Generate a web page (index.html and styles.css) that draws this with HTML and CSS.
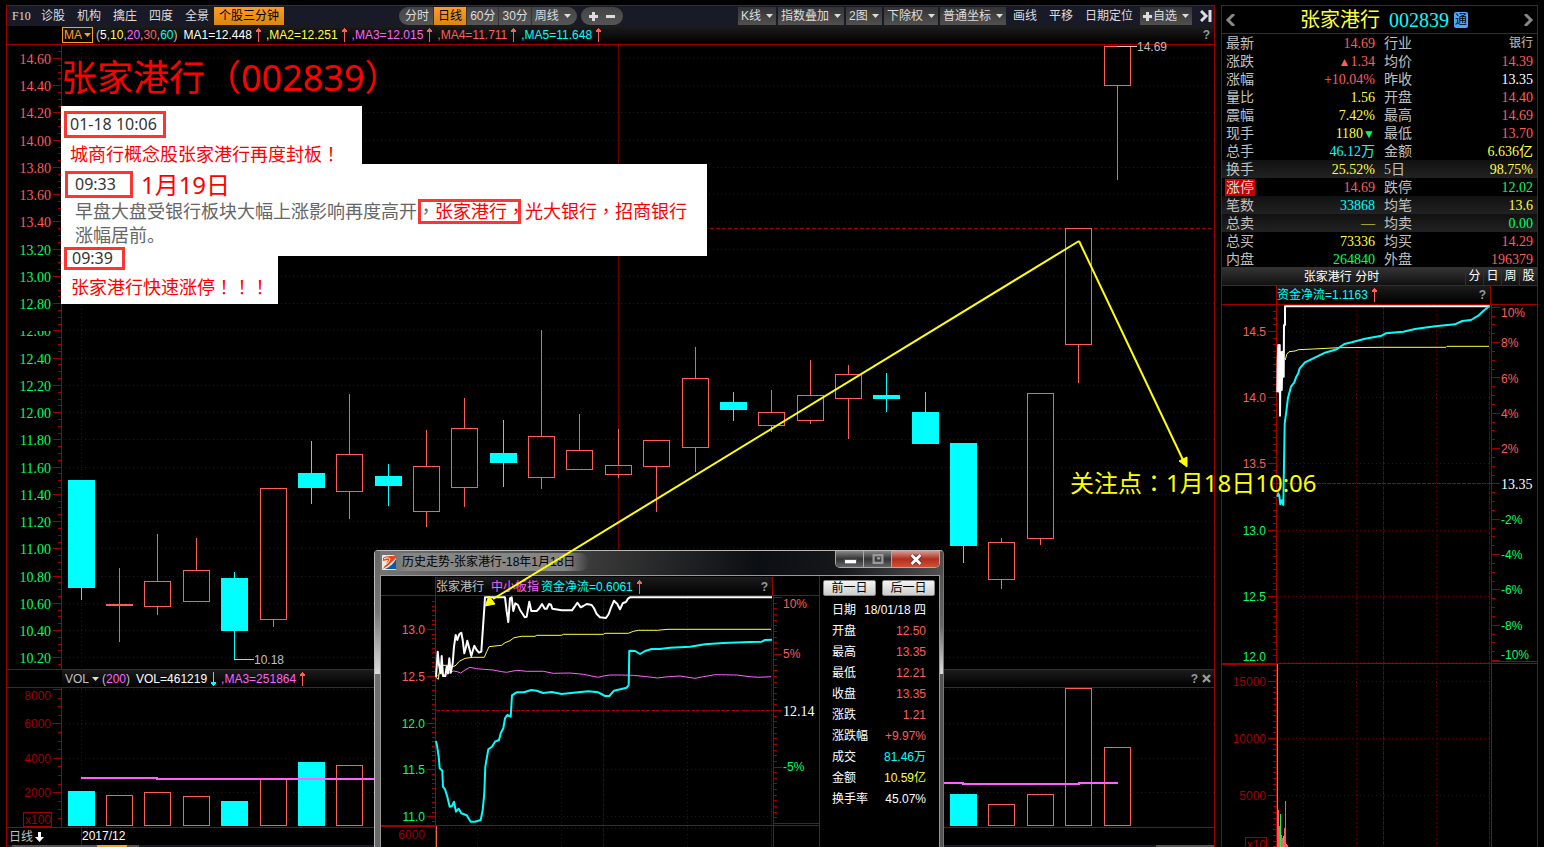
FILE: index.html
```html
<!DOCTYPE html>
<html lang="zh-CN">
<head>
<meta charset="utf-8">
<title>张家港行 002839</title>
<link rel="stylesheet" href="styles.css">
</head>
<body>
<svg class="defs" aria-hidden="true">
  <symbol id="caret" viewBox="0 0 7 4"><path d="M0 0H7L3.5 4Z"/></symbol>
  <symbol id="up" viewBox="0 0 5 14"><path d="M2 0H3V1H4V2H5V4H3V14H2V4H0V2H1V1H2Z"/></symbol>
  <symbol id="down" viewBox="0 0 5 14"><path d="M2 0H3V10H5V12H4V13H3V14H2V13H1V12H0V10H2Z"/></symbol>
  <symbol id="plus" viewBox="0 0 9 9"><path d="M3 0H6V3H9V6H6V9H3V6H0V3H3Z"/></symbol>
</svg>
<main class="market">
  <header class="toolbar">
    <nav class="tabs">
      <a href="#" class="mono">F10</a><a href="#">诊股</a><a href="#">机构</a><a href="#">擒庄</a><a href="#">四度</a><a href="#">全景</a>
    </nav>
    <button class="hot">个股三分钟</button>
    <div class="pill periods">
      <button>分时</button><button class="on">日线</button><button>60分</button><button>30分</button>
      <label class="drop bare"><select aria-label="周期"><option>周线</option></select><svg class="caret"><use href="#caret"/></svg></label>
    </div>
    <div class="pill zoomer">
      <button aria-label="放大"><svg><use href="#plus"/></svg></button>
      <button aria-label="缩小"><svg viewBox="0 0 9 9"><path d="M0 3H9V6H0Z"/></svg></button>
    </div>
    <div class="tools">
      <label class="drop"><select aria-label="K线"><option>K线</option></select><svg class="caret"><use href="#caret"/></svg></label>
      <label class="drop"><select aria-label="指数叠加"><option>指数叠加</option></select><svg class="caret"><use href="#caret"/></svg></label>
      <label class="drop"><select aria-label="图数"><option>2图</option></select><svg class="caret"><use href="#caret"/></svg></label>
      <label class="drop"><select aria-label="除权"><option>下除权</option></select><svg class="caret"><use href="#caret"/></svg></label>
      <label class="drop"><select aria-label="坐标"><option>普通坐标</option></select><svg class="caret"><use href="#caret"/></svg></label>
      <div class="links"><a href="#">画线</a><a href="#">平移</a><a href="#">日期定位</a></div>
      <label class="drop"><svg class="plus"><use href="#plus"/></svg><select aria-label="自选"><option>自选</option></select><svg class="caret"><use href="#caret"/></svg></label>
      <button class="collapse" aria-label="收起"><svg viewBox="0 0 12 12"><path d="M1 1 6 6 1 11M10 0V12" fill="none" stroke="#ddd" stroke-width="3"/></svg></button>
    </div>
  </header>

  <div class="bar">
    <div class="bar-in">
      <label class="ind ma"><select aria-label="主图指标"><option>MA</option></select><svg class="caret"><use href="#caret"/></svg></label>
      <span class="params">(<b class="w">5</b>,<b class="y">10</b>,<b class="m">20</b>,<b class="r">30</b>,<b class="c">60</b>)</span>
      <span class="val w">MA1=12.448<svg class="arrow"><use href="#up"/></svg></span>
      <span class="val y">,MA2=12.251<svg class="arrow"><use href="#up"/></svg></span>
      <span class="val m">,MA3=12.015<svg class="arrow"><use href="#up"/></svg></span>
      <span class="val r">,MA4=11.711<svg class="arrow"><use href="#up"/></svg></span>
      <span class="val c">,MA5=11.648<svg class="arrow"><use href="#up"/></svg></span>
      <button class="help">?</button>
    </div>
  </div>
  <svg class="chart price" id="price"></svg>

  <div class="bar vol-bar">
    <div class="bar-in">
      <label class="ind"><select aria-label="副图指标"><option>VOL</option></select><svg class="caret"><use href="#caret"/></svg></label>
      <span class="params">(<b class="m">200</b>)</span>
      <span class="w val">VOL=461219<svg class="arrow falling"><use href="#down"/></svg></span>
      <span class="m val">,MA3=251864<svg class="arrow"><use href="#up"/></svg></span>
      <button class="help">?</button>
      <button class="close-x" aria-label="关闭"><svg viewBox="0 0 9 9"><path d="M1 1 8 8M8 1 1 8" stroke="#999" stroke-width="2.4"/></svg></button>
    </div>
  </div>
  <svg class="chart volume" id="volume"></svg>

  <footer class="dates">
    <button class="cycle">日线<svg viewBox="0 0 9 10"><path d="M3 0H6V5H9L4.5 10L0 5H3Z"/></svg></button>
    <span class="month">2017/12</span>
  </footer>
  <div class="strip"><i class="s1"></i><i class="s2"></i><i class="s3"></i><i class="s4"></i></div>
</main>

<aside class="quote">
  <header class="stock">
    <button aria-label="上一只"><svg viewBox="0 0 10 12"><path d="M9 0 3 6 9 12" fill="none" stroke="#888" stroke-width="3"/></svg></button>
    <h1><span class="y">张家港行</span> <span class="c">002839</span><em>通</em></h1>
    <button aria-label="下一只"><svg viewBox="0 0 10 12"><path d="M1 0 7 6 1 12" fill="none" stroke="#888" stroke-width="3"/></svg></button>
  </header>
  <table class="facts">
    <tr><th>最新</th><td class="r">14.69</td><th>行业</th><td class="small">银行</td></tr>
    <tr><th>涨跌</th><td class="r"><small>▲</small>1.34</td><th>均价</th><td class="r">14.39</td></tr>
    <tr><th>涨幅</th><td class="r">+10.04%</td><th>昨收</th><td class="w">13.35</td></tr>
    <tr><th>量比</th><td class="y">1.56</td><th>开盘</th><td class="r">14.40</td></tr>
    <tr><th>震幅</th><td class="y">7.42%</td><th>最高</th><td class="r">14.69</td></tr>
    <tr><th>现手</th><td class="y">1180<small class="g">▼</small></td><th>最低</th><td class="r">13.70</td></tr>
    <tr><th>总手</th><td class="c">46.12万</td><th>金额</th><td class="y">6.636亿</td></tr>
    <tr class="lit"><th>换手</th><td class="y">25.52%</td><th>5日</th><td class="y">98.75%</td></tr>
    <tr><th><mark>涨停</mark></th><td class="r">14.69</td><th>跌停</th><td class="g">12.02</td></tr>
    <tr class="lit"><th>笔数</th><td class="c">33868</td><th>均笔</th><td class="y">13.6</td></tr>
    <tr class="lit"><th>总卖</th><td class="y">—</td><th>均卖</th><td class="g">0.00</td></tr>
    <tr><th>总买</th><td class="y">73336</td><th>均买</th><td class="r">14.29</td></tr>
    <tr><th>内盘</th><td class="g">264840</td><th>外盘</th><td class="r">196379</td></tr>
  </table>
  <div class="mini-head">
    <h2>张家港行 分时</h2>
    <button>分</button><button>日</button><button>周</button><button>股</button>
  </div>
  <div class="mini-bar">
    <div class="bar-in"><span class="c flow">资金净流=1.1163<svg class="arrow"><use href="#up"/></svg></span><button class="help">?</button></div>
  </div>
  <svg class="chart intraday" id="intraday"></svg>
</aside>

<section class="popup">
  <header class="titlebar">
    <svg class="logo" viewBox="0 0 14 15"><rect width="14" height="15" rx="1" fill="#f4e9df"/><path d="M1 3C5 0 9 2 14 0V3C9 8 6 11 1 14C3 10 5 8 6 5C4 5 2 6 1 6Z" fill="#e8481c"/><path d="M3 14C8 12 12 8 14 4V14Z" fill="#0e5aa8"/><path d="M2 4C5 2 7 3 8 4C7 7 5 9 3 10" fill="none" stroke="#fff"/></svg>
    <h2>历史走势-张家港行-18年1月18日</h2>
    <div class="win">
      <button aria-label="最小化"><svg viewBox="0 0 12 10"><rect x="1" y="5" width="11" height="4" fill="#fff" stroke="#555"/></svg></button>
      <button class="max" aria-label="最大化"><svg viewBox="0 0 12 10"><path d="M2 1H10V8H2ZM5 4H8" fill="none" stroke="#9a9a9a" stroke-width="2"/></svg></button>
      <button class="shut" aria-label="关闭"><svg viewBox="0 0 12 10"><path d="M2 1 10 9M10 1 2 9" stroke="#633" stroke-width="4.4"/><path d="M2 1 10 9M10 1 2 9" stroke="#fff" stroke-width="2.6"/></svg></button>
    </div>
  </header>
  <div class="pane">
    <div class="trend">
      <div class="trend-bar"><div class="bar-in"><span class="g0">张家港行</span><span class="m">中小板指</span><span class="c flow">资金净流=0.6061<svg class="arrow"><use href="#up"/></svg></span><button class="help">?</button></div></div>
      <svg class="chart history" id="history"></svg>
    </div>
    <div class="day">
      <div class="day-nav"><button>前一日</button><button>后一日</button></div>
      <table>
        <tr><th>日期</th><td class="w">18/01/18 四</td></tr>
        <tr><th>开盘</th><td class="r">12.50</td></tr>
        <tr><th>最高</th><td class="r">13.35</td></tr>
        <tr><th>最低</th><td class="r">12.21</td></tr>
        <tr><th>收盘</th><td class="r">13.35</td></tr>
        <tr><th>涨跌</th><td class="r">1.21</td></tr>
        <tr><th>涨跌幅</th><td class="r">+9.97%</td></tr>
        <tr><th>成交</th><td class="c">81.46万</td></tr>
        <tr><th>金额</th><td class="y">10.59亿</td></tr>
        <tr><th>换手率</th><td class="w">45.07%</td></tr>
      </table>
    </div>
  </div>
</section>

<div class="notes">
  <p class="headline">张家港行（002839）</p>
  <article class="note n1"><time class="stamp">01-18 10:06</time><p>城商行概念股张家港行再度封板<i lang="zh-TW">！</i></p></article>
  <article class="note n2">
    <div class="row"><time class="stamp">09:33</time><strong>1月19日</strong></div>
    <p>早盘大盘受银行板块大幅上涨影响再度高开<span class="ring"><i lang="zh-TW">，</i><b>张家港行<i lang="zh-TW">，</i></b></span><b>光大银行<i lang="zh-TW">，</i>招商银行</b><br>涨幅居前。</p>
  </article>
  <article class="note n3"><time class="stamp">09:39</time><p>张家港行快速涨停<i lang="zh-TW">！！！</i></p></article>
</div>
<p class="focus">关注点<i lang="zh-TW">：</i>1月18日10:06</p>
<svg class="pointer" id="pointer">
  <path d="M1079 241 493 599M1079 241 1183 460" fill="none" stroke="#ff0" stroke-width="2"/>
  <path d="M485 606 489 596 495 604ZM1187 467 1179 461 1187 457Z" fill="#ff0" stroke="#ff0"/>
</svg>
<script src="charts.js"></script>
</body>
</html>
```
FILE: styles.css
```css
* { box-sizing: border-box; }
body {
  margin: 0; padding: 5px 6px 0; height: 100vh; overflow: hidden; position: relative;
  display: flex; gap: 6px; align-items: flex-start; background: #000; color: #c0c0c0;
  font: 12px/18px "Liberation Sans", "Noto Sans CJK SC", sans-serif;
}
button, select {
  font: inherit; color: inherit; background: none; border: 0; padding: 0; margin: 0;
  appearance: none; cursor: pointer; border-radius: 0; line-height: 18px;
}
a { color: inherit; text-decoration: none; }
h1, h2, p { margin: 0; font-weight: 400; }
b, i, em { font-weight: 400; font-style: normal; }
svg { display: block; }
.defs { display: none; }
table { border-collapse: collapse; }
.w { color: #fff; }
.y { color: #ffff40; }
.m { color: #ff60ff; }
.r { color: #ff5c5c; }
.c { color: #0ff; }
.g { color: #00ff60; }
.g0 { color: #c0c0c0; }

.market { flex: 1; min-width: 0; overflow: hidden; border: 1px solid #a00000; border-bottom: 0; }
.toolbar { height: 20px; background: #181a28; display: flex; align-items: center; padding-left: 5px; color: #ddd; white-space: nowrap; }
.tabs { display: flex; gap: 12px; }
.mono { font-family: "Liberation Serif", serif; width: 17px; }
.hot { margin-left: 5px; padding: 0 5px; background: linear-gradient(#ff9c24, #d98612); color: #000; }
.pill { display: flex; border-radius: 9px; background: linear-gradient(#444, #555); height: 18px; overflow: hidden; }
.periods { margin-left: 115px; padding-left: 2px; }
.periods button { padding: 0 4px; border-right: 1px solid #333; }
.periods button:nth-child(n+3) { padding: 0 3px; }
.periods .on { background: linear-gradient(#ff9c24, #d98612); color: #000; }
.zoomer { margin-left: 4px; width: 42px; justify-content: space-evenly; align-items: center; }
.zoomer svg, .plus { width: 9px; height: 9px; fill: #ddd; }
.tools { margin-left: auto; display: flex; align-items: center; gap: 2px; }
.drop { display: flex; align-items: center; gap: 4px; height: 18px; padding: 0 3px; background: linear-gradient(#333, #505050); }
.bare { background: none; padding: 0 6px 0 3px; }
.plus + select { margin-left: -3px; }
.caret { width: 7px; height: 4px; fill: #ddd; }
.links { display: flex; gap: 12px; padding: 0 5px; }
.collapse { padding: 0 2px 0 6px; }
.collapse svg { width: 12px; height: 12px; }

.bar { padding-left: 55px; height: 19px; border-bottom: 1px solid #a00000; }
.bar-in { display: flex; align-items: center; height: 18px; background: linear-gradient(#1c1c1c, #000); white-space: nowrap; }
.ind { display: flex; align-items: center; gap: 2px; }
.ma { border: 1px solid #ff9c24; color: #ff9c24; height: 16px; padding: 0 1px; }
.ma select { line-height: 14px; }
.ma .caret { fill: #ff9c24; }
.params { margin: 0 6px 0 3px; }
.val { display: flex; align-items: center; margin-right: 5px; }
.arrow { width: 5px; height: 14px; fill: #ff5c5c; margin-left: 4px; }
.falling { fill: #0ff; }
.help { margin-left: auto; color: #999; padding: 0 4px; font-weight: 700; }
.vol-bar { border-top: 1px solid #a00000; }
.vol-bar .bar-in { padding-left: 3px; height: 17px; }
.close-x { padding-right: 3px; }
.close-x svg { width: 9px; height: 9px; }

.chart { width: 100%; overflow: hidden; }
.price { height: 624px; overflow: visible; }
.volume { height: 139px; }
.chart text { font: 12px "Liberation Sans", "Noto Sans CJK SC", sans-serif; }
.chart .serif { font: 14px "Liberation Serif", serif; }

.dates { display: flex; border-top: 1px solid #a00000; height: 18px; line-height: 16px; }
.cycle { width: 74px; display: flex; align-items: center; gap: 2px; padding-left: 2px; line-height: 16px; }
.cycle svg { width: 9px; height: 10px; fill: #fff; }
.month { border-left: 1px solid #800000; color: #fff; }
.strip { display: flex; height: 3px; background: #181a28; }
.strip i { background: #555; }
.s1 { width: 85px; margin-left: 5px; }
.strip .s2 { width: 30px; background: #ff9c24; }
.s3 { width: 12px; }
.s4 { width: 58px; margin-left: auto; }

.quote { width: 317px; border: 1px solid #a00000; border-bottom: 0; }
.stock { display: flex; justify-content: space-between; align-items: center; height: 28px; padding: 0 3px; border-bottom: 1px solid #a00000; }
.stock h1 { display: flex; align-items: center; gap: 9px; padding-left: 9px; font: 20px/24px "Liberation Serif", "Noto Sans CJK SC", serif; }
.stock em { background: #4da6ff; color: #000; font-size: 12px; line-height: 16px; padding: 0 1px; border-radius: 2px; margin-left: -4px; }
.stock svg { width: 10px; height: 12px; }
.facts { width: 100%; table-layout: fixed; font: 14px/18px "Liberation Serif", "Noto Sans CJK SC", serif; }
.facts tr { height: 18px; }
.facts th, .facts td { padding: 0; height: 18px; font-weight: 400; line-height: 17px; white-space: nowrap; vertical-align: middle; }
.facts th { text-align: left; padding-left: 4px; width: 44px; }
.facts td:nth-child(2) { width: 109px; }
.facts th:nth-child(3) { padding-left: 9px; }
.facts td { text-align: right; }
.facts td:last-child { padding-right: 4px; }
.facts small { font-size: 12px; line-height: 1px; }
.facts .small { font-size: 12px; }
.facts .lit { background: linear-gradient(#111, #222); }
.facts mark { display: block; margin-left: -1px; width: 30px; padding-left: 1px; background: #c80000; color: #ddd; }
.mini-head { display: flex; height: 19px; border: solid #a00000; border-width: 1px 0; background: linear-gradient(#333, #111); color: #fff; margin-top: -1px; }
.mini-head h2 { flex: 1; text-align: center; font-size: 12px; line-height: 18px; padding-right: 4px; }
.mini-head button { width: 18px; border-left: 1px solid #a00000; color: #fff; line-height: 17px; }
.mini-bar { padding: 0 46px 0 54px; border-bottom: 1px solid #a00000; }
.mini-bar .bar-in { border: solid #a00000; border-width: 0 1px; }
.flow { display: flex; align-items: center; }
.intraday { height: 545px; }

.popup { position: absolute; left: 374px; top: 550px; width: 570px; height: 320px; padding: 0 3px 0 5px; border: 1px solid #bbb; border-bottom: 0; border-right-color: #777; border-radius: 4px 4px 0 0; background: linear-gradient(100deg, #777 0, #333 240px, #0b0e12 380px, #15171b 460px, #555 570px); }
.popup::before { content: ""; position: absolute; left: 0; top: 0; width: 5px; height: 123px; background: linear-gradient(#666, #777 50%, #ddd); }
.popup::after { content: ""; position: absolute; right: 0; top: 25px; width: 3px; height: 98px; background: linear-gradient(#555, #666 50%, #ddd); }
.titlebar { display: flex; align-items: center; height: 24px; padding-left: 2px; }
.logo { position: relative; z-index: 1; width: 14px; height: 15px; margin: 0 6px 2px 0; }
.titlebar h2 { font-size: 12px; color: #000; background: linear-gradient(90deg, transparent, #868686 10%, #868686 88%, transparent); padding: 0 14px; margin: 0 0 2px -14px; border-radius: 9px; }
.win { position: relative; margin-left: auto; align-self: flex-start; display: flex; border: 1px solid #aaa; border-top: 0; border-radius: 0 0 5px 5px; height: 17px; overflow: hidden; }
.win button { width: 28px; border-right: 1px solid #aaa; background: linear-gradient(#888, #333 50%, #666); display: grid; place-items: center; }
.win .shut { width: 47px; border: 0; background: linear-gradient(#d89a90, #b03020 50%, #d05038); }
.win svg { width: 14px; height: 11px; }
.pane { display: flex; background: #000; border: 1px solid #999; border-bottom: 0; height: 300px; }
.trend { width: 439px; border-right: 1px solid #a00000; }
.trend-bar { display: flex; padding: 1px 46px 0 54px; height: 20px; border-bottom: 1px solid #a00000; }
.trend-bar .bar-in { flex: 1; border: solid #a00000; border-width: 0 1px; gap: 2px; padding-top: 2px; }
.trend-bar .m { margin-left: 5px; }
.history { height: 260px; }
.day { flex: 1; padding: 4px 4px 0 3px; }
.day-nav { display: flex; justify-content: space-between; }
.day-nav button { width: 53px; height: 16px; line-height: 14px; border: 1px solid #888; border-radius: 2px; background: linear-gradient(#f4f4f4, #ccc); color: #000; }
.day table { width: 94px; margin: 3px 0 0 9px; table-layout: fixed; }
.day th { padding: 0; width: 30px; height: 21px; text-align: left; font-weight: 400; color: #fff; white-space: nowrap; }
.day td { padding: 0; text-align: right; white-space: nowrap; }

.notes { position: absolute; left: 61px; top: 50px; display: flex; flex-direction: column; align-items: flex-start; font: 18px/24px "Noto Sans", "Noto Sans CJK SC", sans-serif; color: #f00; white-space: nowrap; }
.notes i, .focus i { font-family: "Noto Sans CJK TC", sans-serif; line-height: 1px; }
.headline { font-size: 36px; line-height: 56px; }
.note { background: #fff; padding-left: 3px; }
.stamp { display: block; width: fit-content; border: 3px solid #fb3434; color: #333; font-size: 16px; line-height: 21px; padding: 0 6px 0 3px; }
.n1 { width: 301px; height: 58px; padding-top: 5px; }
.n1 p { line-height: 20px; margin: 6px 0 0 6px; }
.n2 { width: 646px; height: 92px; padding: 7px 0 0 4px; }
.n2 .row { display: flex; align-items: center; gap: 8px; }
.n2 .stamp { padding: 0 14px 0 7px; }
.n2 strong { font-size: 24px; line-height: 27px; font-weight: 400; }
.n2 p { color: #666; margin: 1px 0 0 10px; }
.n2 b { color: #f00; }
.ring { position: relative; }
.ring::before { content: ""; position: absolute; inset: 0 4px -1px 1px; border: 3px solid #fb3434; }
.n3 { width: 217px; height: 48px; }
.n3 .stamp { margin-top: -9px; line-height: 17px; padding: 0 9px 0 5px; position: relative; }
.n3 p { line-height: 20px; margin: 7px 0 0 7px; }
.focus { position: absolute; left: 1070px; top: 468px; font: 24px/30px "Noto Sans", "Noto Sans CJK SC", sans-serif; color: #ff0; white-space: nowrap; }
.pointer { position: absolute; left: 0; top: 0; width: 100%; height: 100%; pointer-events: none; }
```
FILE: charts.js
```js
const RED = '#ff5c5c', CYAN = '#00ffff', GREEN = '#00ff60', AXIS = '#a00000', GRID = '#5a0000', YELLOW = '#ffff40', PINK = '#ff60ff';

// Each chart draws in window coordinates, shifted to its own origin.
function canvas(id, ox, oy) {
  const out = [];
  const api = {
    h(x1, x2, y, color = AXIS, dash = '') { out.push(`<path d="M${x1} ${y + .5}H${x2}" stroke="${color}" stroke-dasharray="${dash}"/>`); },
    v(x, y1, y2, color = AXIS, dash = '') { out.push(`<path d="M${x + .5} ${y1}V${y2}" stroke="${color}" stroke-dasharray="${dash}"/>`); },
    box(x, y, w, h, color, solid) {
      out.push(solid ? `<rect x="${x}" y="${y}" width="${w}" height="${h}" fill="${color}"/>`
        : `<rect x="${x + .5}" y="${y + .5}" width="${w - 1}" height="${h - 1}" fill="#000" stroke="${color}"/>`);
    },
    text(x, y, s, color, anchor = 'end', cls = '', extra = '') { out.push(`<text x="${x}" y="${y}" fill="${color}" text-anchor="${anchor}" class="${cls}" ${extra}>${s}</text>`); },
    line(zx, zy, pts, color, width = 1) {
      const p = pts.trim().split(/\s+/).map(s => { const [a, b] = s.split(',').map(Number); return (zx + a / 3).toFixed(1) + ',' + (zy + b / 3).toFixed(1); });
      out.push(`<polyline points="${p.join(' ')}" fill="none" stroke="${color}" stroke-width="${width}" stroke-linejoin="round"/>`);
    },
    ticks(x, dir, from, to, start, step, every) {
      for (let i = Math.ceil((from - start) / step); start + i * step < to; i++) {
        const len = i % every === 0 ? 8 : 3, y = Math.round(start + i * step);
        api.h(dir < 0 ? x - len : x + 1, dir < 0 ? x : x + 1 + len, y);
      }
    },
    raw(s) { out.push(s); },
    done() { document.getElementById(id).innerHTML = `<g transform="translate(${-ox} ${-oy})">${out.join('')}</g>`; }
  };
  return api;
}

// [centre, high, bodyTop, bodyBottom, low, falling, volumeTop]
const days = [
  [81, 480, 480, 588, 600, 1, 791], [119, 568, 604, 606, 642, 0, 795], [157, 534, 581, 607, 615, 0, 792],
  [196, 538, 570, 602, 602, 0, 796], [234, 572, 578, 631, 660, 1, 801], [273, 488, 488, 620, 627, 0, 779],
  [311, 441, 473, 488, 504, 1, 762], [349, 394, 454, 492, 519, 0, 765], [388, 464, 476, 486, 506, 1, 800],
  [426, 430, 466, 512, 527, 0, 800], [464, 398, 428, 488, 507, 0, 800], [503, 420, 453, 463, 487, 1, 800],
  [541, 330, 436, 478, 489, 0, 800], [579, 414, 450, 470, 470, 0, 800], [618, 429, 465, 475, 478, 0, 800],
  [656, 440, 440, 467, 512, 0, 800], [695, 347, 378, 448, 472, 0, 800], [733, 392, 402, 410, 421, 1, 800],
  [771, 390, 412, 426, 432, 0, 800], [810, 360, 395, 421, 424, 0, 800], [848, 365, 374, 399, 439, 0, 800],
  [886, 373, 395, 399, 412, 1, 800], [925, 392, 412, 444, 444, 1, 800], [963, 443, 443, 546, 563, 1, 794],
  [1001, 538, 542, 580, 589, 0, 804], [1040, 393, 393, 539, 545, 0, 794], [1078, 228, 228, 345, 383, 0, 687],
  [1117, 46, 46, 86, 180, 0, 747]
];

const p = canvas('price', 7, 45);
p.v(61, 45, 670);
p.ticks(61, -1, 45, 668, 58, 6.81, 4);
for (let i = 0; i <= 22; i++) {
  const y = Math.round(58 + i * 27.24), value = (14.6 - i * .2).toFixed(2);
  p.h(65, 4000, y, GRID, '1 3');
  if (i === 10) p.raw('<clipPath id="strip"><rect x="7" y="331" width="50" height="5"/></clipPath>');
  p.text(51, y + 6, value, value > 13.35 ? RED : GREEN, 'end', 'serif', i === 10 ? 'clip-path="url(#strip)"' : '');
}
p.v(81, 49, 670, GRID, '1 3');
p.v(618, 45, 670, '#700000');
p.h(62, 4000, 228, AXIS, '4 2');
for (const [x, hi, top, bottom, low, down] of days) {
  const color = down ? CYAN : RED;
  p.v(x, hi, top, color); p.v(x, bottom, low, color);
  if (down || bottom - top < 3) p.box(x - 13, top, 27, bottom - top, color, true);
  else p.raw(`<rect x="${x - 12.5}" y="${top + .5}" width="26" height="${bottom - top - 1}" fill="none" stroke="${color}"/>`);
}
p.v(119, 568, 642, RED);
p.h(1117, 1137, 46, '#ccc'); p.text(1137, 51, '14.69', '#c0c0c0', 'start');
p.h(234, 254, 659, '#ccc'); p.text(254, 664, '10.18', '#c0c0c0', 'start');
p.done();

const q = canvas('volume', 7, 688);
q.v(61, 688, 830);
q.ticks(61, -1, 688, 825, 689, 8.6, 4);
[[8000, 689, 700], [6000, 723, 728], [4000, 758, 763], [2000, 792, 797]].forEach(([n, y, t]) => {
  q.h(65, 4000, y, GRID, '1 3'); q.text(51, t, n, '#a00000');
});
q.box(23, 812, 29, 15, AXIS); q.text(51, 824, 'x100', '#a00000');
q.v(81, 688, 828, GRID, '1 3');
for (const d of days) q.box(d[0] - 13, Math.max(d[6], 688), 27, 826 - Math.max(d[6], 688), d[5] ? CYAN : RED, !!d[5]);
q.raw(`<path d="M81 778H157V779H400M900 783H963V784H1079V783H1118" fill="none" stroke="${PINK}" stroke-width="2"/>`);
q.done();

const s = canvas('intraday', 1222, 305);
s.v(1276, 305, 860); s.v(1491, 305, 860);
s.ticks(1276, -1, 305, 662, 331, 6.62, 10);
s.ticks(1491, 1, 305, 661, 306.8, 8.83, 4);
[1303, 1356, 1436].forEach(x => s.v(x, 306, 860, GRID, '1 3'));
[1383, 1489].forEach(x => s.v(x, 306, 860, '#700000', '4 1'));
['14.5', '14.0', '13.5', '13.0', '12.5', '12.0'].forEach((t, i) => {
  const y = Math.round(331 + i * 66.2);
  s.h(1280, 1490, y, GRID, '1 3');
  s.text(1266, i === 5 ? 661 : y + 5, t, i < 3 ? RED : GREEN);
});
['10%', '8%', '6%', '4%', '2%', '13.35', '-2%', '-4%', '-6%', '-8%', '-10%'].forEach((t, i) => {
  const y = i === 0 ? 317 : i === 10 ? 659 : Math.round(312 + i * 35.3);
  s.text(1501, i === 5 ? 489 : y, t, i < 5 ? RED : i === 5 ? '#fff' : GREEN, 'start', i === 5 ? 'serif' : '');
});
s.h(1277, 1491, 483, AXIS, '4 1');
s.h(1491, 1538, 661); s.h(1222, 1538, 663); s.h(1222, 1276, 664);
s.line(1215, 265, '187,382 188,290 190,240 192,380 194,240 195,452 197,260 200,375 203,260 206,335 207,180 210,180 210,124 824,124', '#fff', 2);
s.line(1215, 265, '211,285 215,268 222,260 240,258 250,254 295,252 370,248 505,247 693,247 696,244 822,244', YELLOW);
s.line(1215, 265, '187,695 190,685 193,692 196,718 200,706 205,720 207,600 209,475 214,440 219,398 228,365 238,352 244,335 250,325 254,310 270,292 295,280 330,263 365,253 388,237 410,232 450,221 500,212 512,205 565,200 600,192 660,184 720,178 742,168 768,165 790,152 805,138 822,124', CYAN, 2);
s.ticks(1276, -1, 666, 860, 681, 5.7, 10);
[15000, 10000, 5000].forEach((n, i) => { const y = 681 + i * 57; s.h(1280, 1490, y, GRID, '1 3'); s.text(1266, y + 5, n, '#a00000'); });
s.box(1245, 837, 22, 15, AXIS); s.text(1266, 849, 'x10', '#a00000');
[[1277, 664], [1278, 810], [1279, 826], [1280, 814, 1], [1281, 835], [1282, 838], [1283, 836, 1], [1284, 828], [1285, 801], [1286, 844], [1287, 845]]
  .forEach(([x, y, up]) => s.v(x, y, 860, up ? GREEN : RED));
s.done();

const t = canvas('history', 381, 596);
t.v(435, 596, 860); t.v(773, 596, 860);
t.ticks(435, -1, 597, 824, 629, 4.68, 10);
t.ticks(773, 1, 597, 820, 710, 5.65, 10);
[477, 561, 687].forEach(x => t.v(x, 598, 860, GRID, '1 3'));
[603, 771].forEach(x => t.v(x, 598, 860, '#500000', '4 1'));
['13.0', '12.5', '12.0', '11.5', '11.0'].forEach((n, i) => {
  const y = Math.round(629 + i * 46.8);
  t.h(439, 772, y, GRID, '1 3'); t.text(425, y + 5, n, i < 2 ? RED : GREEN);
});
t.h(436, 773, 710, AXIS, '4 1');
t.text(783, 608, '10%', RED, 'start'); t.text(783, 658, '5%', RED, 'start');
t.text(783, 716, '12.14', '#fff', 'start', 'serif'); t.text(783, 771, '-5%', GREEN, 'start');
t.h(381, 820, 825); t.h(381, 435, 826); t.h(773, 820, 823);
t.h(439, 772, 828, GRID, '1 3');
t.text(425, 839, '6000', '#a00000');
t.v(436, 826, 860, RED);
t.line(370, 540, '198,412 210,400 225,405 240,398 250,393 262,395 272,399 285,390 300,382 320,386 340,388 370,390 395,395 410,397 440,391 470,394 520,394 550,400 600,399 640,403 665,408 685,412 700,408 720,405 750,405 790,406 830,410 862,414 895,410 930,408 975,415 1000,410 1035,404 1100,405 1140,410 1165,412 1203,410', PINK);
t.line(370, 540, '198,412 205,418 210,380 216,376 236,376 245,380 255,378 268,364 285,355 310,352 343,352 350,335 357,320 375,318 395,316 405,308 420,302 432,293 455,289 495,289 500,286 575,286 580,283 700,283 705,280 775,280 790,274 806,271 862,271 894,268 1203,268', YELLOW);
t.line(370, 540, '198,603 202,622 206,650 209,685 217,692 219,740 225,748 232,770 239,800 246,798 252,785 258,815 266,806 274,820 290,826 302,845 315,845 332,840 338,810 343,760 346,680 355,628 366,620 375,605 387,600 392,580 400,565 405,535 412,525 422,530 426,466 435,460 440,457 462,457 484,450 500,452 520,459 545,456 575,462 610,458 655,454 685,457 705,468 718,468 732,452 770,443 776,435 778,332 795,333 810,342 825,333 845,327 870,327 900,323 960,320 1005,313 1060,309 1140,306 1175,305 1185,300 1206,299', CYAN, 2);
t.line(370, 540, '198,410 203,335 207,375 212,400 215,348 219,408 226,408 230,380 234,400 238,355 242,398 248,370 252,320 257,285 262,300 268,283 274,278 278,300 283,340 287,325 292,302 298,325 304,348 309,330 313,317 320,330 327,338 334,335 339,262 343,205 345,172 405,172 410,215 415,246 420,175 425,172 430,213 436,190 444,195 450,210 458,222 464,232 470,230 478,185 484,213 500,213 508,205 516,192 524,206 530,206 537,192 543,194 547,206 575,211 606,211 614,200 622,188 632,202 640,198 650,192 665,195 672,205 680,222 690,232 708,234 716,222 722,205 732,182 742,192 750,208 758,190 768,186 775,175 780,172 1206,172', '#fff', 2);
t.done();
```
